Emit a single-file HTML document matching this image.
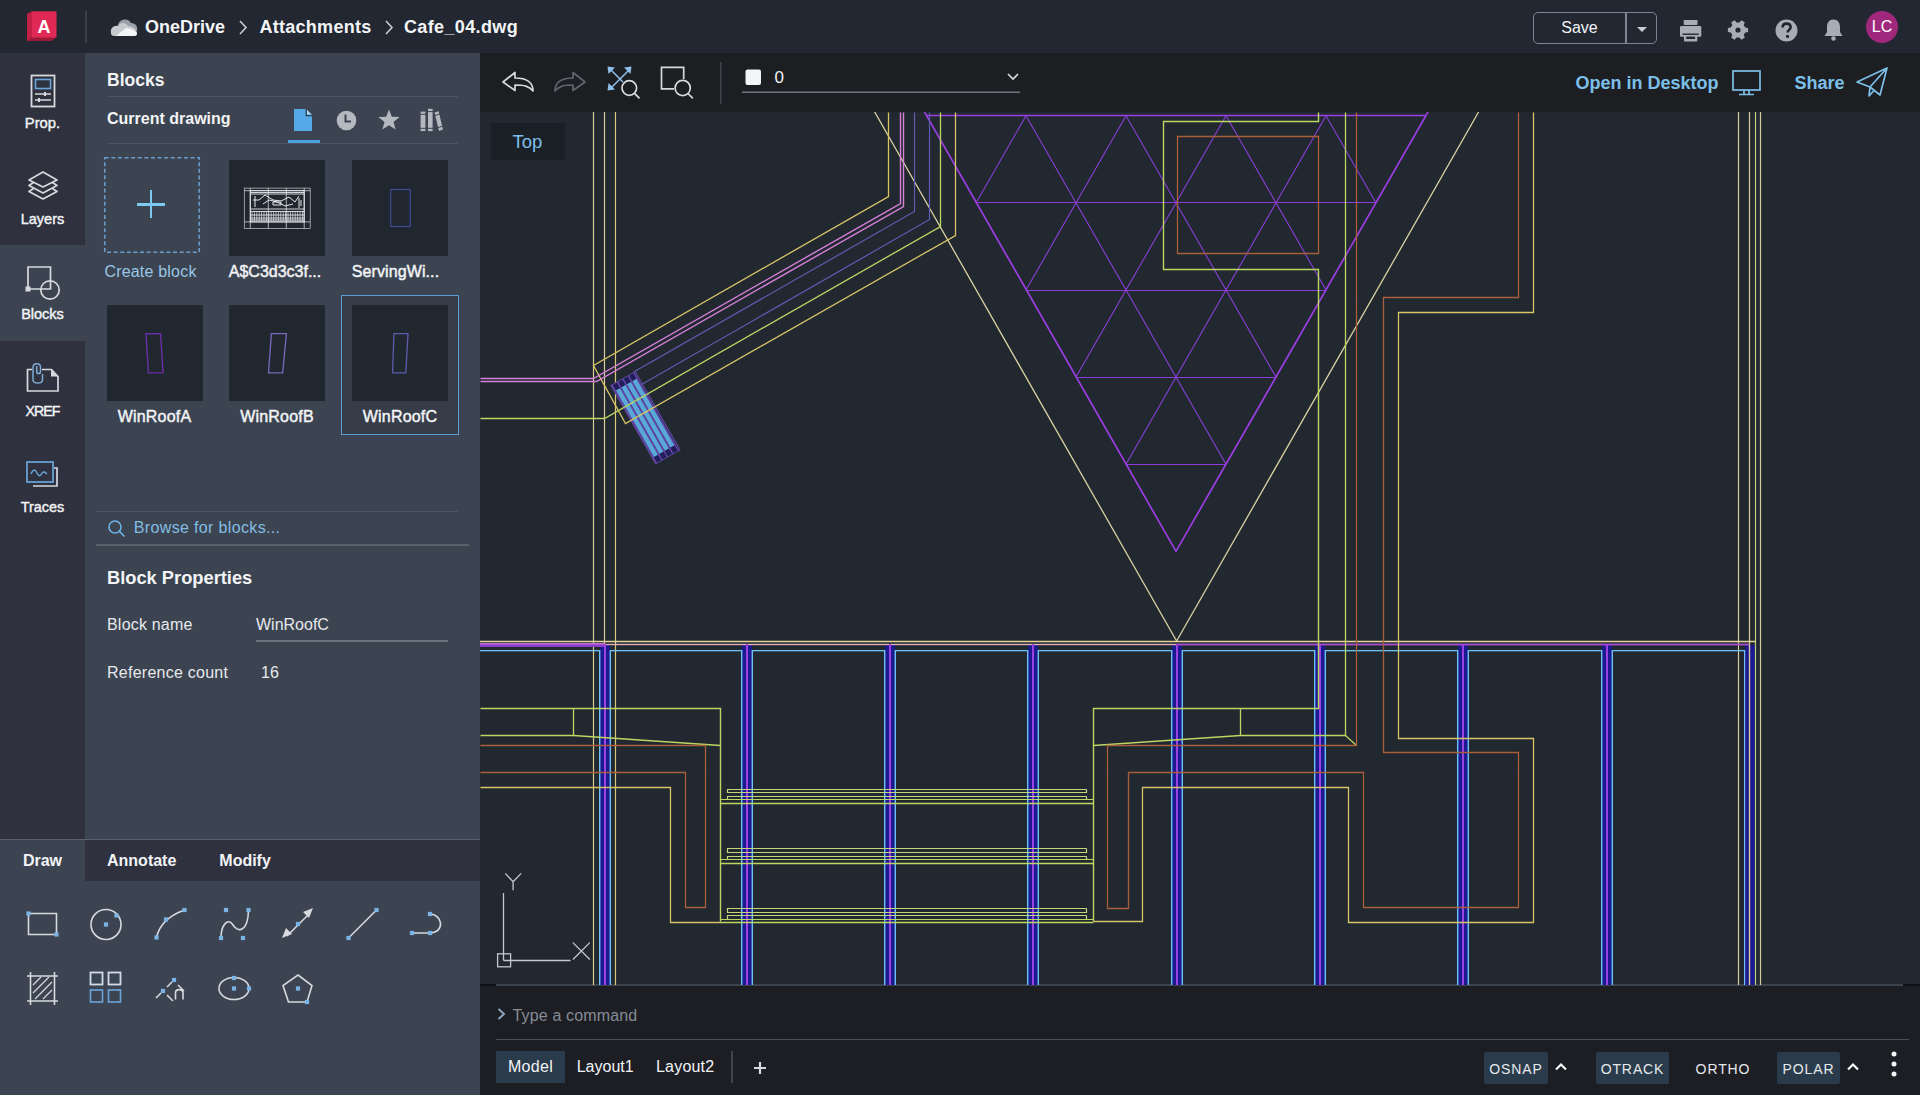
<!DOCTYPE html>
<html><head><meta charset="utf-8"><title>AutoCAD Web</title>
<style>
html,body{margin:0;padding:0;width:1920px;height:1095px;overflow:hidden;background:#21272f;font-family:"Liberation Sans",sans-serif;}
.r,.t,.a{position:absolute;}
.t{white-space:nowrap;}
</style></head><body>
<div class="r" style="left:0px;top:0px;width:1920px;height:53px;background:#222732;"></div>
<div class="r" style="left:0px;top:53px;width:85px;height:786px;background:#2f323e;"></div>
<div class="r" style="left:85px;top:53px;width:395px;height:786px;background:#3d4451;"></div>
<div class="r" style="left:0px;top:245px;width:85px;height:96px;background:#3d4451;"></div>
<div class="r" style="left:0px;top:839px;width:480px;height:1px;background:#5a616c;"></div>
<div class="r" style="left:0px;top:840px;width:480px;height:41px;background:#2f323e;"></div>
<div class="r" style="left:0px;top:840px;width:85px;height:41px;background:#3d4451;"></div>
<div class="r" style="left:0px;top:881px;width:480px;height:214px;background:#3d4451;"></div>
<div class="r" style="left:480px;top:53px;width:1440px;height:59px;background:#1c1e22;"></div>
<div class="r" style="left:480px;top:112px;width:1440px;height:873px;background:#222830;"></div>
<div class="r" style="left:480px;top:985px;width:1440px;height:110px;background:#1c1e23;"></div>
<div class="r" style="left:496px;top:984px;width:1407px;height:2px;background:#3d434d;"></div>
<div class="r" style="left:480px;top:984px;width:16px;height:2px;background:#0e1013;"></div>
<div class="r" style="left:1903px;top:984px;width:17px;height:2px;background:#0e1013;"></div>
<div class="r" style="left:496px;top:1039px;width:1413px;height:1px;background:#4a505a;"></div>
<svg class="a" style="left:480px;top:112px" width="1440" height="873" viewBox="480 112 1440 873"><g stroke-linecap="butt" stroke-linejoin="miter"><rect x="600" y="645" width="10" height="340" fill="#1c1a8e"/><rect x="742" y="645" width="10" height="340" fill="#1c1a8e"/><rect x="885" y="645" width="10" height="340" fill="#1c1a8e"/><rect x="1028" y="645" width="10" height="340" fill="#1c1a8e"/><rect x="1172" y="645" width="10" height="340" fill="#1c1a8e"/><rect x="1315" y="645" width="10" height="340" fill="#1c1a8e"/><rect x="1458" y="645" width="10" height="340" fill="#1c1a8e"/><rect x="1602" y="645" width="10" height="340" fill="#1c1a8e"/><rect x="1745" y="645" width="10" height="340" fill="#1c1a8e"/><line x1="926" y1="115.5" x2="1426" y2="115.5" stroke="#8a3ed6" stroke-width="1.1"/><line x1="976" y1="202.5" x2="1376" y2="202.5" stroke="#8a3ed6" stroke-width="1.1"/><line x1="1026" y1="290.5" x2="1326" y2="290.5" stroke="#8a3ed6" stroke-width="1.1"/><line x1="1076" y1="377.5" x2="1276" y2="377.5" stroke="#8a3ed6" stroke-width="1.1"/><line x1="1126" y1="464.5" x2="1226" y2="464.5" stroke="#8a3ed6" stroke-width="1.1"/><line x1="1026" y1="115.8" x2="1226" y2="464.2" stroke="#8a3ed6" stroke-width="1.1"/><line x1="1026" y1="115.8" x2="976" y2="202.89999999999998" stroke="#8a3ed6" stroke-width="1.1"/><line x1="1126" y1="115.8" x2="1276" y2="377.09999999999997" stroke="#8a3ed6" stroke-width="1.1"/><line x1="1126" y1="115.8" x2="1026" y2="290.0" stroke="#8a3ed6" stroke-width="1.1"/><line x1="1226" y1="115.8" x2="1326" y2="290.0" stroke="#8a3ed6" stroke-width="1.1"/><line x1="1226" y1="115.8" x2="1076" y2="377.09999999999997" stroke="#8a3ed6" stroke-width="1.1"/><line x1="1326" y1="115.8" x2="1376" y2="202.89999999999998" stroke="#8a3ed6" stroke-width="1.1"/><line x1="1326" y1="115.8" x2="1126" y2="464.2" stroke="#8a3ed6" stroke-width="1.1"/><path d="M924.5 112 L1176 551.3 L1428 112" stroke="#9a3ee2" stroke-width="1.7" fill="none"/><line x1="926" y1="115.5" x2="1426" y2="115.5" stroke="#9a3ee2" stroke-width="1.4"/><path d="M874.7 112 L1176.6 641 L1478.6 112" stroke="#d8d2a0" stroke-width="1.3" fill="none"/><line x1="593.5" y1="112" x2="593.5" y2="985" stroke="#d9cc90" stroke-width="1.2"/><line x1="604.5" y1="112" x2="604.5" y2="645" stroke="#d6cc9c" stroke-width="1.2"/><line x1="615.5" y1="112" x2="615.5" y2="985" stroke="#d8c878" stroke-width="1.2"/><line x1="1738.5" y1="112" x2="1738.5" y2="985" stroke="#d6cc9c" stroke-width="1.2"/><line x1="1749.5" y1="112" x2="1749.5" y2="985" stroke="#d6cc9c" stroke-width="1.2"/><line x1="1755.5" y1="112" x2="1755.5" y2="985" stroke="#b8d478" stroke-width="1.2"/><line x1="1760.5" y1="112" x2="1760.5" y2="985" stroke="#d6cc9c" stroke-width="1.2"/><line x1="480" y1="641.5" x2="1756" y2="641.5" stroke="#e2d49a" stroke-width="1.3"/><rect x="1177" y="643.6" width="572" height="1.8" fill="#a850d0"/><rect x="604" y="643.8" width="573" height="1.4" fill="#e2b0b8"/><rect x="480" y="643" width="124" height="4" fill="#8a3cc8"/><rect x="480" y="643.2" width="124" height="1.3" fill="#c878d8"/><rect x="480" y="650" width="119" height="1.3" fill="#6cc2f6"/><rect x="611" y="650" width="130" height="1.3" fill="#6cc2f6"/><rect x="753" y="650" width="131" height="1.3" fill="#6cc2f6"/><rect x="896" y="650" width="131" height="1.3" fill="#6cc2f6"/><rect x="1039" y="650" width="132" height="1.3" fill="#6cc2f6"/><rect x="1183" y="650" width="131" height="1.3" fill="#6cc2f6"/><rect x="1326" y="650" width="131" height="1.3" fill="#6cc2f6"/><rect x="1469" y="650" width="132" height="1.3" fill="#6cc2f6"/><rect x="1613" y="650" width="132" height="1.3" fill="#6cc2f6"/><rect x="599" y="650" width="1.4" height="335" fill="#6cc2f6"/><rect x="609.6" y="650" width="1.4" height="335" fill="#6cc2f6"/><rect x="604" y="644" width="2" height="341" fill="#9b42e0"/><rect x="741" y="650" width="1.4" height="335" fill="#6cc2f6"/><rect x="751.6" y="650" width="1.4" height="335" fill="#6cc2f6"/><rect x="746" y="644" width="2" height="341" fill="#9b42e0"/><rect x="884" y="650" width="1.4" height="335" fill="#6cc2f6"/><rect x="894.6" y="650" width="1.4" height="335" fill="#6cc2f6"/><rect x="889" y="644" width="2" height="341" fill="#9b42e0"/><rect x="1027" y="650" width="1.4" height="335" fill="#6cc2f6"/><rect x="1037.6" y="650" width="1.4" height="335" fill="#6cc2f6"/><rect x="1032" y="644" width="2" height="341" fill="#9b42e0"/><rect x="1171" y="650" width="1.4" height="335" fill="#6cc2f6"/><rect x="1181.6" y="650" width="1.4" height="335" fill="#6cc2f6"/><rect x="1176" y="644" width="2" height="341" fill="#9b42e0"/><rect x="1314" y="650" width="1.4" height="335" fill="#6cc2f6"/><rect x="1324.6" y="650" width="1.4" height="335" fill="#6cc2f6"/><rect x="1319" y="644" width="2" height="341" fill="#9b42e0"/><rect x="1457" y="650" width="1.4" height="335" fill="#6cc2f6"/><rect x="1467.6" y="650" width="1.4" height="335" fill="#6cc2f6"/><rect x="1462" y="644" width="2" height="341" fill="#9b42e0"/><rect x="1601" y="650" width="1.4" height="335" fill="#6cc2f6"/><rect x="1611.6" y="650" width="1.4" height="335" fill="#6cc2f6"/><rect x="1606" y="644" width="2" height="341" fill="#9b42e0"/><rect x="1744" y="650" width="1.2" height="335" fill="#6cc2f6"/><line x1="1749.5" y1="645" x2="1749.5" y2="985" stroke="#d6cc9c" stroke-width="1.2"/><path d="M1318.5 112.5 L1318.5 121.5 L1163.5 121.5 L1163.5 269.5 L1318.5 269.5 L1318.5 708.5 L1093.5 708.5 L1093.5 921.5" stroke="#bcd662" stroke-width="1.4" fill="none"/><path d="M1177.5 136.5 L1318.5 136.5 L1318.5 253.5 L1177.5 253.5 Z" stroke="#a85f3a" stroke-width="1.3" fill="none"/><path d="M1345.5 112.5 L1345.5 735.5 L1240.5 735.5 L1240.5 708.5" stroke="#bcd662" stroke-width="1.3" fill="none"/><path d="M1240.5 735.5 L1093.5 745.5" stroke="#bcd662" stroke-width="1.3" fill="none"/><path d="M1345.5 735.5 L1356.5 745.5" stroke="#bcd662" stroke-width="1.2" fill="none"/><path d="M1356.5 112.5 L1356.5 745.5 L1107.5 745.5 L1107.5 908.5 L1128.5 908.5 L1128.5 772.5 L1363.5 772.5 L1363.5 907.5 L1518.5 907.5 L1518.5 752.5 L1383.5 752.5 L1383.5 297.5 L1518.5 297.5 L1518.5 112.5" stroke="#a85f3a" stroke-width="1.3" fill="none"/><path d="M1093.5 921.5 L1142.5 921.5 L1142.5 787.5 L1348.5 787.5 L1348.5 922.5 L1533.5 922.5 L1533.5 738.5 L1398.5 738.5 L1398.5 312.5 L1533.5 312.5 L1533.5 112.5" stroke="#d8c466" stroke-width="1.3" fill="none"/><path d="M480.5 708.5 L720.5 708.5 L720.5 921.5" stroke="#bcd662" stroke-width="1.4" fill="none"/><path d="M573.5 708.5 L573.5 735.5 L480.5 735.5" stroke="#bcd662" stroke-width="1.3" fill="none"/><path d="M573.5 735.5 L720.5 745.5" stroke="#bcd662" stroke-width="1.3" fill="none"/><path d="M480.5 745.5 L705.5 745.5 L705.5 907.5 L685.5 907.5 L685.5 772.5 L480.5 772.5" stroke="#a85f3a" stroke-width="1.3" fill="none"/><path d="M480.5 787.5 L670.5 787.5 L670.5 922.5 L720.5 922.5" stroke="#d8c466" stroke-width="1.3" fill="none"/><path d="M1086.5 789.5 L727.5 789.5 L727.5 792.5 L1086.5 792.5 L1086.5 789.5" stroke="#c6d47a" stroke-width="1.2" fill="none"/><path d="M1086.5 796.5 L727.5 796.5 L727.5 799.5 L1086.5 799.5 L1086.5 796.5" stroke="#c6d47a" stroke-width="1.2" fill="none"/><line x1="720" y1="799.5" x2="1093.5" y2="799.5" stroke="#bcd662" stroke-width="1.2"/><line x1="720" y1="803.5" x2="1093.5" y2="803.5" stroke="#bcd662" stroke-width="1.3"/><path d="M1086.5 848.5 L727.5 848.5 L727.5 852.5 L1086.5 852.5 L1086.5 848.5" stroke="#c6d47a" stroke-width="1.2" fill="none"/><path d="M1086.5 856.5 L727.5 856.5 L727.5 859.5 L1086.5 859.5 L1086.5 856.5" stroke="#c6d47a" stroke-width="1.2" fill="none"/><line x1="720" y1="859.5" x2="1093.5" y2="859.5" stroke="#bcd662" stroke-width="1.2"/><line x1="720" y1="863.5" x2="1093.5" y2="863.5" stroke="#bcd662" stroke-width="1.3"/><path d="M1086.5 908.5 L727.5 908.5 L727.5 912.5 L1086.5 912.5 L1086.5 908.5" stroke="#c6d47a" stroke-width="1.2" fill="none"/><path d="M1086.5 915.5 L727.5 915.5 L727.5 919.5 L1086.5 919.5 L1086.5 915.5" stroke="#c6d47a" stroke-width="1.2" fill="none"/><line x1="720" y1="919.5" x2="1093.5" y2="919.5" stroke="#bcd662" stroke-width="1.2"/><line x1="720" y1="922.5" x2="1093.5" y2="922.5" stroke="#bcd662" stroke-width="1.3"/><g transform="translate(645.5 417.7) rotate(-29.7)"><rect x="-14" y="-45" width="28" height="90" fill="#232046" stroke="#5a4a9c" stroke-width="1.1"/><rect x="-12.2" y="-38.5" width="4.8" height="77" fill="#5aa8d8"/><rect x="-12.2" y="-44.5" width="4.8" height="6" fill="#221e5a"/><rect x="-12.2" y="38.5" width="4.8" height="6" fill="#221e5a"/><rect x="-5.8999999999999995" y="-38.5" width="4.8" height="77" fill="#5aa8d8"/><rect x="-5.8999999999999995" y="-44.5" width="4.8" height="6" fill="#221e5a"/><rect x="-5.8999999999999995" y="38.5" width="4.8" height="6" fill="#221e5a"/><rect x="0.40000000000000036" y="-38.5" width="4.8" height="77" fill="#5aa8d8"/><rect x="0.40000000000000036" y="-44.5" width="4.8" height="6" fill="#221e5a"/><rect x="0.40000000000000036" y="38.5" width="4.8" height="6" fill="#221e5a"/><rect x="6.699999999999999" y="-38.5" width="4.8" height="77" fill="#5aa8d8"/><rect x="6.699999999999999" y="-44.5" width="4.8" height="6" fill="#221e5a"/><rect x="6.699999999999999" y="38.5" width="4.8" height="6" fill="#221e5a"/><line x1="-13.0" y1="-45" x2="-13.0" y2="45" stroke="#6a44b0" stroke-width="1.4"/><line x1="-6.7" y1="-45" x2="-6.7" y2="45" stroke="#6a44b0" stroke-width="1.4"/><line x1="-0.40000000000000036" y1="-45" x2="-0.40000000000000036" y2="45" stroke="#6a44b0" stroke-width="1.4"/><line x1="5.899999999999999" y1="-45" x2="5.899999999999999" y2="45" stroke="#6a44b0" stroke-width="1.4"/><line x1="12.2" y1="-45" x2="12.2" y2="45" stroke="#6a44b0" stroke-width="1.4"/></g><path d="M888.5 112.5 L888.5 196.5 L593.5 365.5 L625.5 423.5 L955.5 235.5 L955.5 112.5" stroke="#d8c466" stroke-width="1.3" fill="none"/><path d="M480.5 378.5 L593.5 378.5 L900.5 203.5 L900.5 112.5" stroke="#d47fd8" stroke-width="1.4" fill="none"/><path d="M480.5 381.5 L596.5 381.5 L903.5 206.5 L903.5 112.5" stroke="#d47fd8" stroke-width="1.4" fill="none"/><path d="M634.5 371.5 L914.5 211.5 L914.5 112.5" stroke="#5e5bb2" stroke-width="1.2" fill="none"/><path d="M641.5 384.5 L929.5 219.5 L929.5 112.5" stroke="#5e5bb2" stroke-width="1.2" fill="none"/><path d="M480.5 418.5 L604.5 418.5 L940.5 226.5 L940.5 112.5" stroke="#bcd662" stroke-width="1.3" fill="none"/><g stroke="#c4c8ce" stroke-width="1.3" fill="none"><path d="M503.5 893 V960.5 M503.5 960.5 H570.5"/><rect x="497.6" y="953.8" width="13" height="13"/><path d="M505.3 873.4 L513.1 881.8 L521.2 873.4 M513.1 881.8 V890.3"/><path d="M572.9 942.6 L589.8 959.5 M589.8 942.6 L572.9 959.5"/></g></g></svg>
<svg class="a" style="left:24px;top:10px" width="36" height="34" viewBox="0 0 36 34">
<path d="M3 4 L8 1.5 L32 1.5 L32 27 L28 31 L3 31 Z" fill="#9c1a38"/>
<path d="M7.5 1.5 L32.5 1.5 L32.5 27.5 L7.5 27.5 Z" fill="#e02a55"/>
<path d="M3 4 L7.5 1.5 L7.5 27.5 L3 31 Z" fill="#c21f47"/>
<text x="20" y="23" font-family="Liberation Sans" font-weight="700" font-size="18" fill="#fff" text-anchor="middle">A</text>
</svg>
<div class="r" style="left:85px;top:11px;width:2px;height:32px;background:#3a404a;"></div>
<svg class="a" style="left:109px;top:16px" width="30" height="21" viewBox="0 0 30 21">
<path d="M9 9 C10 3 19 1 22 7 C27 7 29 11 28 15 L12 15 Z" fill="#9aa0a8"/>
<path d="M2 17 C1 12 5 9 9 10 C11 6 17 6 19 10 C24 10 27 13 28 17 C28 19 27 20 25 20 L5 20 C3 20 2 19 2 17Z" fill="#c7cbd0"/>
<path d="M7 20 L17 12 C20 12 24 13 28 17 C28 19 27 20 25 20 Z" fill="#f4f5f6"/>
</svg>
<div class="t" style="left:145px;top:18.1px;font-size:18px;line-height:18px;color:#f2f4f6;font-weight:700;">OneDrive</div>
<svg class="a" style="left:239px;top:20px" width="9" height="15"><path d="M1 1 L7 7.5 L1 14" stroke="#c8ccd2" stroke-width="1.6" fill="none"/></svg>
<div class="t" style="left:259.5px;top:18.1px;font-size:18px;line-height:18px;color:#f2f4f6;font-weight:700;letter-spacing:0.27px;">Attachments</div>
<svg class="a" style="left:385px;top:20px" width="9" height="15"><path d="M1 1 L7 7.5 L1 14" stroke="#c8ccd2" stroke-width="1.6" fill="none"/></svg>
<div class="t" style="left:404px;top:18.1px;font-size:18px;line-height:18px;color:#f2f4f6;font-weight:700;letter-spacing:0.36px;">Cafe_04.dwg</div>
<div class="r" style="left:1533px;top:12px;width:124px;height:32px;background:transparent;border:1.5px solid #7e8590;border-radius:5px;box-sizing:border-box;"></div>
<div class="r" style="left:1625px;top:13px;width:1.5px;height:30px;background:#7e8590;"></div>
<div class="t" style="left:1279.5px;width:600px;text-align:center;top:20.3px;font-size:16px;line-height:16px;color:#f2f4f6;font-weight:400;">Save</div>
<svg class="a" style="left:1636px;top:26px" width="12" height="7"><path d="M1 1 L11 1 L6 6 Z" fill="#c8ccd2"/></svg>
<svg class="a" style="left:1678px;top:18px" width="26" height="26" viewBox="0 0 26 26">
<rect x="5.7" y="1.9" width="13.8" height="5" rx="0.8" fill="#a9aeb6"/>
<rect x="2" y="8.1" width="21.3" height="10.7" rx="1.2" fill="#a9aeb6"/>
<rect x="6" y="16.9" width="13.3" height="6.6" rx="0.8" fill="#a9aeb6"/>
<rect x="8.2" y="18.6" width="8.9" height="2.4" fill="#222732"/>
<rect x="4.5" y="15.5" width="16.3" height="1.4" fill="#222732"/>
</svg>
<svg class="a" style="left:1711px;top:8px" width="54" height="44" viewBox="0 0 54 44">
<path d="M37.09 19.95 L37.09 24.05 L34.21 24.42 L32.70 27.03 L33.82 29.72 L30.28 31.77 L28.51 29.45 L25.49 29.45 L23.72 31.77 L20.18 29.72 L21.30 27.03 L19.79 24.42 L16.91 24.05 L16.91 19.95 L19.79 19.58 L21.30 16.97 L20.18 14.28 L23.72 12.23 L25.49 14.55 L28.51 14.55 L30.28 12.23 L33.82 14.28 L32.70 16.97 L34.21 19.58Z" fill="#a8adb5"/><circle cx="27" cy="22" r="4.2" fill="#a9aeb6"/><circle cx="27" cy="22" r="2.6" fill="#222732"/></svg>
<svg class="a" style="left:1775px;top:19px" width="23" height="23" viewBox="0 0 23 23">
<circle cx="11.5" cy="11.5" r="11" fill="#a8adb5"/>
<path d="M7.6 8.6 C7.6 5.8 9.6 4.6 11.6 4.6 C13.9 4.6 15.6 6 15.6 8.2 C15.6 10.8 12.6 11 12.6 13.6" stroke="#1f242d" stroke-width="2.6" fill="none"/>
<circle cx="12.5" cy="17.4" r="1.6" fill="#1f242d"/>
</svg>
<svg class="a" style="left:1823px;top:18px" width="21" height="24" viewBox="0 0 21 24">
<path d="M10.5 1.5 C6 1.5 4 5 4 9 L4 14 L1.5 18 L19.5 18 L17 14 L17 9 C17 5 15 1.5 10.5 1.5Z" fill="#a8adb5"/>
<circle cx="10.5" cy="20.5" r="2.3" fill="#a8adb5"/>
</svg>
<div class="r" style="left:1866px;top:10.5px;width:32px;height:32px;border-radius:50%;background:#a0287c;"></div>
<div class="t" style="left:1582px;width:600px;text-align:center;top:19.0px;font-size:16px;line-height:16px;color:#fff;font-weight:400;">LC</div>
<svg class="a" style="left:30px;top:74px" width="26" height="34" viewBox="0 0 26 34">
<rect x="1.5" y="1.5" width="23" height="31" fill="none" stroke="#d6d9de" stroke-width="1.8"/>
<rect x="5.5" y="5.5" width="15" height="9" fill="none" stroke="#6aa6dc" stroke-width="1.6"/>
<path d="M5 20 H21 M5 26 H21" stroke="#d6d9de" stroke-width="1.5"/>
<path d="M15 18 V22 M9 24 V28" stroke="#d6d9de" stroke-width="2"/>
</svg>
<div class="t" style="left:-257.5px;width:600px;text-align:center;top:115.5px;font-size:14.8px;line-height:14.8px;color:#f2f4f6;font-weight:400;-webkit-text-stroke:0.4px #f2f4f6;">Prop.</div>
<svg class="a" style="left:25px;top:169px" width="36" height="36" viewBox="0 0 36 36">
<path d="M18 3 L32 11 L18 18 L4 11 Z" fill="none" stroke="#d6d9de" stroke-width="1.7" stroke-linejoin="round"/>
<path d="M8.5 13.5 L4 16.5 L18 24 L32 16.5 L27.5 13.5" fill="none" stroke="#d6d9de" stroke-width="1.7" stroke-linejoin="round"/>
<path d="M8.5 19.5 L4 22.5 L18 30 L32 22.5 L27.5 19.5" fill="none" stroke="#d6d9de" stroke-width="1.7" stroke-linejoin="round"/>
</svg>
<div class="t" style="left:-257.5px;width:600px;text-align:center;top:211.7px;font-size:14.5px;line-height:14.5px;color:#f2f4f6;font-weight:400;-webkit-text-stroke:0.4px #f2f4f6;">Layers</div>
<svg class="a" style="left:25px;top:264px" width="36" height="37" viewBox="0 0 36 37">
<path d="M3 3 H25.5 V25 H3 Z" fill="none" stroke="#d6d9de" stroke-width="1.7"/>
<circle cx="25" cy="26" r="9.2" fill="none" stroke="#d6d9de" stroke-width="1.7"/>

<rect x="0.5" y="22.5" width="5" height="5" fill="#d6d9de"/>
</svg>
<div class="t" style="left:-257.5px;width:600px;text-align:center;top:307.2px;font-size:14.5px;line-height:14.5px;color:#f2f4f6;font-weight:400;-webkit-text-stroke:0.4px #f2f4f6;">Blocks</div>
<svg class="a" style="left:25px;top:362px" width="36" height="32" viewBox="0 0 36 32">
<path d="M7 7.5 H2.5 V29 H33 V14.5 L26.5 7.5 H17" fill="none" stroke="#d6d9de" stroke-width="1.7"/>
<path d="M26 7.5 L26 14.5 L33 14.5 Z" fill="#d6d9de"/>
<path d="M11.7 4 V9.5 C11.7 12.3 15.5 12.3 15.5 9.5 V5.5 C15.5 0.6 8 0.6 8 5.5 V17.5 C8 22.3 17.5 22.3 17.5 17.5 V12" fill="none" stroke="#7eaad4" stroke-width="1.5"/>
</svg>
<div class="t" style="left:-257.5px;width:600px;text-align:center;top:403.8px;font-size:14.2px;line-height:14.2px;color:#f2f4f6;font-weight:400;letter-spacing:-0.9px;-webkit-text-stroke:0.4px #f2f4f6;">XREF</div>
<svg class="a" style="left:25px;top:460px" width="36" height="30" viewBox="0 0 36 30">
<path d="M8 26 H32 V8 H29" fill="none" stroke="#d6d9de" stroke-width="1.7"/>
<rect x="2" y="2" width="26" height="20" fill="none" stroke="#6aa6dc" stroke-width="1.7"/>
<path d="M6 14 C8 9 10 9 12 13 C14 17 16 16 17 13 C18 11 20 12 22 14" fill="none" stroke="#6aa6dc" stroke-width="1.5"/>
</svg>
<div class="t" style="left:-257.5px;width:600px;text-align:center;top:499.5px;font-size:14.4px;line-height:14.4px;color:#f2f4f6;font-weight:400;-webkit-text-stroke:0.4px #f2f4f6;">Traces</div>
<div class="t" style="left:107px;top:71.9px;font-size:17.5px;line-height:17.5px;color:#f2f4f6;font-weight:700;">Blocks</div>
<div class="r" style="left:107px;top:96px;width:351px;height:1px;background:#4e5562;"></div>
<div class="t" style="left:107px;top:110.8px;font-size:16px;line-height:16px;color:#f2f4f6;font-weight:700;">Current drawing</div>
<div class="r" style="left:107px;top:143px;width:351px;height:1px;background:#4e5562;"></div>
<div class="r" style="left:288px;top:140px;width:32px;height:3px;background:#4a9fe0;"></div>
<svg class="a" style="left:293px;top:108px" width="20" height="24" viewBox="0 0 20 24"><path d="M1 1 H13 L19 7 V23 H1 Z" fill="#55a9e6"/><path d="M13.2 1 V7.6 H19.5" fill="none" stroke="#2c3f55" stroke-width="1.3"/><path d="M14 1.8 L18.7 6.6 H14 Z" fill="#a8d0ee"/></svg>
<svg class="a" style="left:336px;top:110px" width="21" height="21" viewBox="0 0 21 21"><circle cx="10.5" cy="10.5" r="9.8" fill="#b4b8bf"/><path d="M9.5 4.5 V11.5 H15" stroke="#3c4350" stroke-width="2" fill="none"/></svg>
<svg class="a" style="left:378px;top:109px" width="22" height="22" viewBox="0 0 22 22"><path d="M11 0.6 L13.8 7.8 L21.6 8.1 L15.5 12.9 L17.6 20.5 L11 16.2 L4.4 20.5 L6.5 12.9 L0.4 8.1 L8.2 7.8 Z" fill="#b4b8bf"/></svg>
<svg class="a" style="left:419px;top:108px" width="26" height="25" viewBox="0 0 26 25"><rect x="1.6" y="3.6" width="4.8" height="19.5" fill="#b4b8bf"/><rect x="9" y="0.8" width="4.6" height="22.3" fill="#b4b8bf"/><path d="M15.6 4.6 L19.6 3.2 L24 21.6 L20 23 Z" fill="#b4b8bf"/><path d="M1 6.3 H7 M1 20.3 H7 M8.5 3.6 H14 M8.5 20.3 H14 M16 7.4 L20.6 6 M19 19.6 L23.5 18.2" stroke="#3d4451" stroke-width="1"/></svg>
<svg class="a" style="left:103px;top:156px" width="98" height="98"><rect x="1.75" y="1.75" width="94.5" height="94.5" fill="none" stroke="#6a9ccc" stroke-width="1.6" stroke-dasharray="4 2.6"/></svg>
<div class="r" style="left:136.5px;top:203px;width:28.5px;height:2.6px;background:#7cc8f0;"></div>
<div class="r" style="left:149.5px;top:190px;width:2.6px;height:28px;background:#7cc8f0;"></div>
<div class="t" style="left:-149.5px;width:600px;text-align:center;top:264.0px;font-size:16px;line-height:16px;color:#98c6e6;font-weight:400;letter-spacing:0.2px;">Create block</div>
<div class="r" style="left:341px;top:295px;width:118px;height:140px;background:#363c48;"></div>
<div class="r" style="left:229px;top:160px;width:96px;height:96px;background:#21272f;"></div>
<div class="r" style="left:352px;top:160px;width:96px;height:96px;background:#21272f;"></div>
<div class="r" style="left:107px;top:305px;width:96px;height:96px;background:#21272f;"></div>
<div class="r" style="left:229px;top:305px;width:96px;height:96px;background:#21272f;"></div>
<div class="r" style="left:352px;top:305px;width:96px;height:96px;background:#21272f;"></div>
<div class="r" style="left:341px;top:295px;width:118px;height:140px;background:transparent;border:1.5px solid #5a9fd4;box-sizing:border-box;"></div>
<svg class="a" style="left:229px;top:160px" width="96" height="96" viewBox="0 0 96 96"><g stroke="#e8eaed" stroke-width="0.7" fill="none"><rect x="15.3" y="28.1" width="65.9" height="40.4" stroke="#c8cbd0"/><path d="M15.3 30.7 H81.2 M15.3 61.9 H81.2 M21.3 28.1 V68.5 M39.3 28.1 V68.5 M57.3 28.1 V68.5 M75.2 28.1 V68.5"/><rect x="21.3" y="30.7" width="53.9" height="31.2" stroke-width="1"/><path d="M22 32.5 H75 M22 34 H75 M22 49 H75 M22 51.5 H75 M22 55 H75 M22 58 H75 M22 60 H75" stroke-width="0.9"/><path d="M26 36 V47 M24 40 H30 L36 35 L44 40 L52 41 L60 37 L66 42 L70 36 M34 44 L40 40 L48 42 L56 46 L64 44 M44 42 H52 V45 H44 Z M70 38 V48 M72 40 V46" stroke-width="1"/><path d="M23.0 51.5 V61"/><path d="M25.4 51.5 V61"/><path d="M27.8 51.5 V61"/><path d="M30.2 51.5 V61"/><path d="M32.6 51.5 V61"/><path d="M35.0 51.5 V61"/><path d="M37.4 51.5 V61"/><path d="M39.8 51.5 V61"/><path d="M42.2 51.5 V61"/><path d="M44.6 51.5 V61"/><path d="M47.0 51.5 V61"/><path d="M49.4 51.5 V61"/><path d="M51.8 51.5 V61"/><path d="M54.2 51.5 V61"/><path d="M56.6 51.5 V61"/><path d="M59.0 51.5 V61"/><path d="M61.4 51.5 V61"/><path d="M63.8 51.5 V61"/><path d="M66.2 51.5 V61"/><path d="M68.6 51.5 V61"/><path d="M71.0 51.5 V61"/><path d="M73.4 51.5 V61"/></g></svg>
<svg class="a" style="left:352px;top:160px" width="96" height="96"><rect x="38.7" y="29.5" width="19.5" height="37" fill="none" stroke="#3e4a94" stroke-width="1.2"/></svg>
<svg class="a" style="left:107px;top:305px" width="96" height="96"><path d="M39 28.7 H53.6 L56 67.9 H41.4 Z" fill="none" stroke="#6a2fa8" stroke-width="1.4"/></svg>
<svg class="a" style="left:229px;top:305px" width="96" height="96"><path d="M42.4 28.7 H57.4 L53.7 67.9 H39.5 Z" fill="none" stroke="#7a68c0" stroke-width="1.3"/></svg>
<svg class="a" style="left:352px;top:305px" width="96" height="96"><path d="M41.9 28.7 H56 L53.8 67.9 H40.6 Z" fill="none" stroke="#5c5cb0" stroke-width="1.3"/></svg>
<div class="t" style="left:-25px;width:600px;text-align:center;top:264.0px;font-size:16px;line-height:16px;color:#f2f4f6;font-weight:400;-webkit-text-stroke:0.45px #f2f4f6;">A$C3d3c3f...</div>
<div class="t" style="left:95.5px;width:600px;text-align:center;top:264.0px;font-size:16px;line-height:16px;color:#f2f4f6;font-weight:400;letter-spacing:0.1px;-webkit-text-stroke:0.45px #f2f4f6;">ServingWi...</div>
<div class="t" style="left:-145.5px;width:600px;text-align:center;top:409.0px;font-size:16px;line-height:16px;color:#f2f4f6;font-weight:400;letter-spacing:0.2px;-webkit-text-stroke:0.45px #f2f4f6;">WinRoofA</div>
<div class="t" style="left:-23px;width:600px;text-align:center;top:409.0px;font-size:16px;line-height:16px;color:#f2f4f6;font-weight:400;letter-spacing:0.2px;-webkit-text-stroke:0.45px #f2f4f6;">WinRoofB</div>
<div class="t" style="left:100px;width:600px;text-align:center;top:409.0px;font-size:16px;line-height:16px;color:#f2f4f6;font-weight:400;letter-spacing:0.2px;-webkit-text-stroke:0.45px #f2f4f6;">WinRoofC</div>
<div class="r" style="left:96px;top:511px;width:362px;height:1px;background:#4e5562;"></div>
<svg class="a" style="left:107px;top:519px" width="20" height="20" viewBox="0 0 20 20"><circle cx="8" cy="8" r="6" fill="none" stroke="#6cb4e8" stroke-width="1.6"/><path d="M12.3 12.3 L17.5 17.5" stroke="#6cb4e8" stroke-width="1.6"/></svg>
<div class="t" style="left:133.8px;top:519.5px;font-size:16px;line-height:16px;color:#82bde3;font-weight:400;letter-spacing:0.35px;">Browse for blocks...</div>
<div class="r" style="left:96px;top:544px;width:373px;height:1.5px;background:#5a616c;"></div>
<div class="t" style="left:107px;top:568.5px;font-size:18.3px;line-height:18.3px;color:#f2f4f6;font-weight:700;">Block Properties</div>
<div class="t" style="left:107px;top:617.0px;font-size:16px;line-height:16px;color:#e6e9ec;font-weight:400;letter-spacing:0.2px;">Block name</div>
<div class="t" style="left:256px;top:617.0px;font-size:16px;line-height:16px;color:#e6e9ec;font-weight:400;">WinRoofC</div>
<div class="r" style="left:256px;top:640px;width:192px;height:1.5px;background:#6a717c;"></div>
<div class="t" style="left:107px;top:665.0px;font-size:16px;line-height:16px;color:#e6e9ec;font-weight:400;letter-spacing:0.25px;">Reference count</div>
<div class="t" style="left:261px;top:665.0px;font-size:16px;line-height:16px;color:#e6e9ec;font-weight:400;">16</div>
<div class="t" style="left:-257.5px;width:600px;text-align:center;top:853.0px;font-size:16px;line-height:16px;color:#f2f4f6;font-weight:700;">Draw</div>
<div class="t" style="left:107px;top:853.0px;font-size:16px;line-height:16px;color:#f2f4f6;font-weight:700;">Annotate</div>
<div class="t" style="left:219.3px;top:853.0px;font-size:16px;line-height:16px;color:#f2f4f6;font-weight:700;">Modify</div>
<svg class="a" style="left:0px;top:881px" width="480" height="140" viewBox="0 881 480 140"><g stroke="#d6d9de" stroke-width="1.6" fill="none"><path d="M28.5 913.5 H56.5 V934.5 H28.5 Z"/><circle cx="106" cy="924.5" r="15"/><path d="M156.5 937.5 C159 926 168 916 184.5 910"/><path d="M221 938 C221 925 228 917 233 925 C238 933 248 932 248.5 910"/><path d="M287 936 L310 913"/></g><g fill="#d6d9de"><path d="M282 938 L286 928 L292 934 Z"/><path d="M313 908 L303 912 L309 918 Z"/></g><g stroke="#d6d9de" stroke-width="1.6" fill="none"><path d="M348.5 938 L376.5 910"/><path d="M412 933 H430 M430 914 C442 914 446 932 430 933"/><path d="M27 976 H58 M27 1001 H58 M30.5 972 V1005 M54.5 972 V1005"/><path d="M33 985 L41 977 M33 993 L49 977 M35 999 L52 982 M43 999 L52 990" stroke-width="1.2"/><path d="M298 975 L312 985.5 L307 1002 L288.5 1002 L283 985.5 Z"/><ellipse cx="234" cy="988.5" rx="15" ry="11"/><path d="M156 998 L161 993 M167 987 L172 982 M167 995 L173 1001 M178 985 L184 991 M175.5 999.5 V993 C175.5 988.5 183 988.5 183 993 V999.5"/></g><g stroke="#6aa6dc" stroke-width="1.6" fill="none"><rect x="90.5" y="972.5" width="12" height="12"/><rect x="108.5" y="972.5" width="12" height="12"/><rect x="90.5" y="990" width="12" height="12"/><rect x="108.5" y="990" width="12" height="12"/></g><g stroke="#d6d9de" stroke-width="1.6" fill="none"><rect x="90.5" y="972.5" width="12" height="12"/><rect x="108.5" y="972.5" width="12" height="12"/></g><rect x="26.4" y="911.4" width="4.2" height="4.2" fill="#7ab4e6"/><rect x="54.4" y="932.4" width="4.2" height="4.2" fill="#7ab4e6"/><rect x="103.9" y="922.4" width="4.2" height="4.2" fill="#7ab4e6"/><rect x="114.4" y="913.4" width="4.2" height="4.2" fill="#7ab4e6"/><rect x="154.4" y="935.4" width="4.2" height="4.2" fill="#7ab4e6"/><rect x="163.9" y="917.4" width="4.2" height="4.2" fill="#7ab4e6"/><rect x="182.4" y="907.9" width="4.2" height="4.2" fill="#7ab4e6"/><rect x="218.9" y="935.9" width="4.2" height="4.2" fill="#7ab4e6"/><rect x="223.9" y="907.9" width="4.2" height="4.2" fill="#7ab4e6"/><rect x="240.9" y="935.9" width="4.2" height="4.2" fill="#7ab4e6"/><rect x="246.4" y="907.9" width="4.2" height="4.2" fill="#7ab4e6"/><rect x="295.9" y="921.9" width="4.2" height="4.2" fill="#7ab4e6"/><rect x="374.4" y="907.9" width="4.2" height="4.2" fill="#7ab4e6"/><rect x="346.4" y="935.9" width="4.2" height="4.2" fill="#7ab4e6"/><rect x="409.9" y="930.9" width="4.2" height="4.2" fill="#7ab4e6"/><rect x="427.9" y="930.9" width="4.2" height="4.2" fill="#7ab4e6"/><rect x="427.9" y="911.9" width="4.2" height="4.2" fill="#7ab4e6"/><rect x="160.9" y="988.9" width="4.2" height="4.2" fill="#7ab4e6"/><rect x="171.9" y="977.9" width="4.2" height="4.2" fill="#7ab4e6"/><rect x="231.9" y="986.4" width="4.2" height="4.2" fill="#7ab4e6"/><rect x="231.9" y="975.9" width="4.2" height="4.2" fill="#7ab4e6"/><rect x="246.9" y="986.4" width="4.2" height="4.2" fill="#7ab4e6"/><rect x="295.9" y="986.4" width="4.2" height="4.2" fill="#7ab4e6"/><rect x="304.9" y="999.9" width="4.2" height="4.2" fill="#7ab4e6"/></svg>
<svg class="a" style="left:480px;top:53px" width="600" height="59" viewBox="480 53 600 59"><path d="M503 82 L515 72.5 V78 C526 78 533 82 533 91 C529 86 524 85 515 85 V90.5 Z" fill="none" stroke="#d6d9de" stroke-width="1.7" stroke-linejoin="round"/><path d="M585 82 L573 72.5 V78 C562 78 555 82 555 91 C559 86 564 85 573 85 V90.5 Z" fill="none" stroke="#5f656e" stroke-width="1.7" stroke-linejoin="round"/><g stroke="#8cc0ea" stroke-width="1.5" fill="none"><path d="M610 69 L623 82 M630.5 68.5 L610 89"/></g><g fill="#8cc0ea"><path d="M607.5 66.5 L615 67.5 L608.5 74 Z"/><path d="M631.5 66.5 L624 67.5 L630.5 74 Z"/><path d="M607.5 90.5 L615 89.5 L608.5 83 Z"/></g><g stroke="#d6d9de" stroke-width="1.7" fill="none"><circle cx="629.3" cy="88" r="7.3"/><path d="M634.5 93.3 L639.5 98.3"/></g><g stroke="#d6d9de" stroke-width="1.7" fill="none"><path d="M683.7 79 V67.3 H661.5 V88.8 H674"/><circle cx="682.7" cy="88" r="7.6"/><path d="M688 93.5 L692.8 98.3"/></g><rect x="720" y="62" width="1.5" height="42" fill="#3f444d"/><rect x="745.5" y="69.5" width="15.5" height="15.5" rx="2" fill="#f4f5f6"/><rect x="742" y="91.5" width="278" height="1.5" fill="#6e747e"/><path d="M1008 74 L1013 79 L1018 74" stroke="#d6d9de" stroke-width="1.7" fill="none"/></svg>
<div class="t" style="left:774.5px;top:68.8px;font-size:17px;line-height:17px;color:#f2f4f6;font-weight:400;">0</div>
<div class="t" style="left:1575.5px;top:74.2px;font-size:18px;line-height:18px;color:#7cc0ea;font-weight:700;">Open in Desktop</div>
<svg class="a" style="left:1731px;top:69px" width="32" height="28" viewBox="0 0 32 28"><rect x="2" y="2" width="27" height="19" fill="none" stroke="#7cc0ea" stroke-width="1.7"/><path d="M13 21 V25 M18 21 V25 M8 25.5 H23" stroke="#7cc0ea" stroke-width="1.7"/></svg>
<div class="t" style="left:1794.6px;top:74.2px;font-size:18px;line-height:18px;color:#7cc0ea;font-weight:700;">Share</div>
<svg class="a" style="left:1855px;top:66px" width="35" height="32" viewBox="0 0 35 32"><path d="M2 16 L32 2 L25 29 L15 21 Z M15 21 L32 2 M15 21 L14 30 L19 24.5" fill="none" stroke="#7cc0ea" stroke-width="1.7" stroke-linejoin="round"/></svg>
<svg class="a" style="left:496px;top:1007px" width="12" height="14"><path d="M2.5 2 L8 7 L2.5 12" stroke="#8aa4c2" stroke-width="2" fill="none"/></svg>
<div class="t" style="left:512.5px;top:1007.5px;font-size:16px;line-height:16px;color:#868c95;font-weight:400;letter-spacing:0.15px;">Type a command</div>
<div class="r" style="left:496px;top:1051px;width:69px;height:32px;background:#2a3b4b;"></div>
<div class="t" style="left:230.5px;width:600px;text-align:center;top:1058.9px;font-size:16px;line-height:16px;color:#f2f4f6;font-weight:400;letter-spacing:0.3px;">Model</div>
<div class="t" style="left:576.7px;top:1058.9px;font-size:16px;line-height:16px;color:#f2f4f6;font-weight:400;">Layout1</div>
<div class="t" style="left:656px;top:1058.9px;font-size:16px;line-height:16px;color:#f2f4f6;font-weight:400;letter-spacing:0.2px;">Layout2</div>
<div class="r" style="left:731px;top:1051px;width:1.5px;height:32px;background:#3f444d;"></div>
<svg class="a" style="left:753px;top:1061px" width="14" height="14"><path d="M7 1 V13 M1 7 H13" stroke="#d6d9de" stroke-width="2.2"/></svg>
<div class="r" style="left:1484px;top:1052px;width:64px;height:32px;background:#2a3b4b;border-radius:2px;"></div>
<div class="t" style="left:1216.0px;width:600px;text-align:center;top:1062.1px;font-size:14px;line-height:14px;color:#e6e9ec;font-weight:400;letter-spacing:0.9px;">OSNAP</div>
<div class="r" style="left:1596px;top:1052px;width:73px;height:32px;background:#2a3b4b;border-radius:2px;"></div>
<div class="t" style="left:1332.5px;width:600px;text-align:center;top:1062.1px;font-size:14px;line-height:14px;color:#e6e9ec;font-weight:400;letter-spacing:0.9px;">OTRACK</div>
<div class="t" style="left:1423.0px;width:600px;text-align:center;top:1062.1px;font-size:14px;line-height:14px;color:#e6e9ec;font-weight:400;letter-spacing:0.9px;">ORTHO</div>
<div class="r" style="left:1777px;top:1052px;width:63px;height:32px;background:#2a3b4b;border-radius:2px;"></div>
<div class="t" style="left:1508.5px;width:600px;text-align:center;top:1062.1px;font-size:14px;line-height:14px;color:#e6e9ec;font-weight:400;letter-spacing:0.9px;">POLAR</div>
<svg class="a" style="left:1554px;top:1062px" width="14" height="10"><path d="M2 7.5 L7 2.5 L12 7.5" stroke="#f2f4f6" stroke-width="2.2" fill="none"/></svg>
<svg class="a" style="left:1846px;top:1062px" width="14" height="10"><path d="M2 7.5 L7 2.5 L12 7.5" stroke="#f2f4f6" stroke-width="2.2" fill="none"/></svg>
<svg class="a" style="left:1889px;top:1050px" width="10" height="28"><circle cx="5" cy="4" r="2.5" fill="#f2f4f6"/><circle cx="5" cy="14" r="2.5" fill="#f2f4f6"/><circle cx="5" cy="24" r="2.5" fill="#f2f4f6"/></svg>
<div class="r" style="left:491px;top:122.5px;width:74px;height:37px;background:#1b1f26;"></div>
<div class="t" style="left:227.5px;width:600px;text-align:center;top:132.5px;font-size:18.5px;line-height:18.5px;color:#7cc0ea;font-weight:400;">Top</div>
</body></html>
